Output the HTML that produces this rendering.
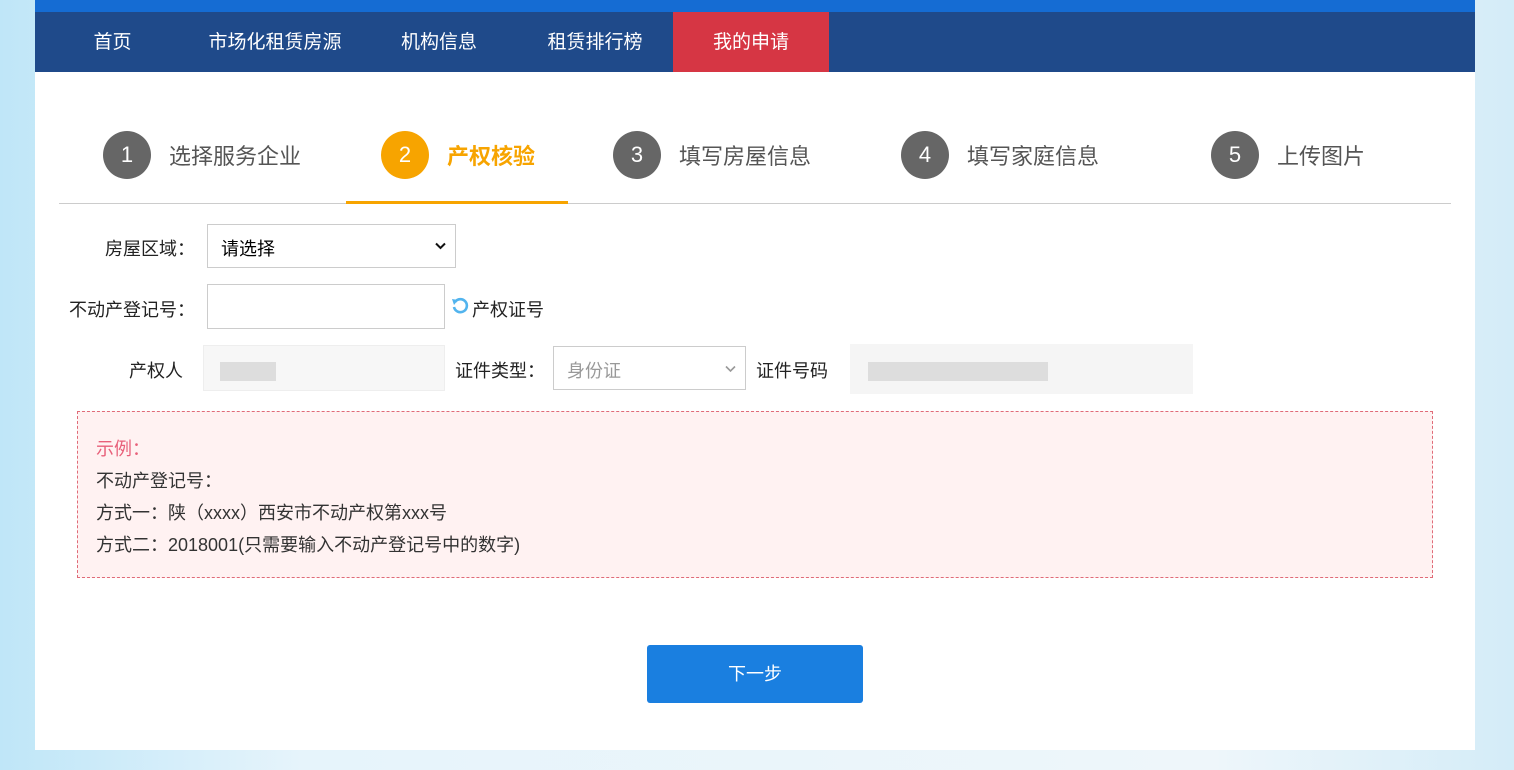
<!DOCTYPE html>
<html><head><meta charset="utf-8"><style>
body{margin:0;width:1514px;height:770px;overflow:hidden;background:linear-gradient(90deg,#bfe6f8,#e6f4fb 20%,#eef6fa 80%,#d4ecf8);font-family:"Liberation Sans","Noto Sans CJK SC",sans-serif;position:relative}
.abs{position:absolute}
.top{left:35px;top:0;width:1440px;height:12px;background:#156cd3}
.nav{left:35px;top:12px;width:1440px;height:60px;background:#1f4a8a}
.nav span{position:absolute;top:0;height:60px;line-height:62px;color:#fff;font-size:19px;text-align:center}
.main{left:35px;top:72px;width:1440px;height:678px;background:#fff}
.step{position:absolute;top:131px;height:48px;display:flex;align-items:center;font-size:22px;color:#555}
.c{width:48px;height:48px;border-radius:50%;background:#666;color:#fff;text-align:center;line-height:48px;font-size:22px;margin-right:18px}
.lbl{position:absolute;font-size:18px;color:#222;text-align:right}
.box{position:absolute;border:1px solid #ccc;background:#fff;box-sizing:border-box}
</style></head><body>
<div class="abs top"></div>
<div class="abs nav">
<span style="left:40px;width:75px">首页</span>
<span style="left:160px;width:160px">市场化租赁房源</span>
<span style="left:354px;width:100px">机构信息</span>
<span style="left:495px;width:130px">租赁排行榜</span>
<span style="left:638px;width:156px;background:#d63644">我的申请</span>
</div>
<div class="abs main"></div>
<div class="step" style="left:103px"><div class="c">1</div>选择服务企业</div>
<div class="step" style="left:381px;color:#f7a400;font-weight:bold"><div class="c" style="background:#f7a400;font-weight:normal">2</div>产权核验</div>
<div class="step" style="left:613px"><div class="c">3</div>填写房屋信息</div>
<div class="step" style="left:901px"><div class="c">4</div>填写家庭信息</div>
<div class="step" style="left:1211px"><div class="c">5</div>上传图片</div>
<div class="abs" style="left:59px;top:203px;width:1392px;height:1px;background:#ccc"></div>
<div class="abs" style="left:346px;top:201px;width:222px;height:3px;background:#f7a400"></div>

<div class="lbl" style="left:60px;top:235px;width:135px">房屋区域：</div>
<div class="box" style="left:207px;top:224px;width:249px;height:44px;font-size:18px;padding:10px 13px">请选择<svg style="position:absolute;right:9px;top:17px" width="11" height="8" viewBox="0 0 11 8"><path d="M1 1.5 L5.5 6 L10 1.5" fill="none" stroke="#111" stroke-width="2"/></svg></div>
<div class="lbl" style="left:60px;top:296px;width:135px">不动产登记号：</div>
<div class="box" style="left:207px;top:284px;width:238px;height:45px"></div>
<svg class="abs" style="left:451px;top:297px" width="18" height="18" viewBox="0 0 18 18"><path d="M4 5 A6.5 6.5 0 1 1 3 10" fill="none" stroke="#52b4ee" stroke-width="2.6"/><path d="M1 2 L7 3 L3 8Z" fill="#52b4ee"/></svg>
<div class="lbl" style="left:472px;top:296px;text-align:left">产权证号</div>
<div class="lbl" style="left:60px;top:357px;width:123px">产权人</div>
<div class="box" style="left:203px;top:345px;width:242px;height:46px;background:#f7f7f7;border-color:#eee"></div>
<div class="abs" style="left:220px;top:362px;width:56px;height:19px;background:#ddd"></div>
<div class="lbl" style="left:455px;top:357px;text-align:left">证件类型：</div>
<div class="box" style="left:553px;top:346px;width:193px;height:44px;color:#999;font-size:18px;padding:10px 13px">身份证<svg style="position:absolute;right:9px;top:18px" width="11" height="8" viewBox="0 0 11 8"><path d="M1 1.5 L5.5 6 L10 1.5" fill="none" stroke="#999" stroke-width="1.6"/></svg></div>
<div class="lbl" style="left:756px;top:357px;text-align:left">证件号码</div>
<div class="abs" style="left:850px;top:344px;width:343px;height:50px;background:#f5f5f5"></div>
<div class="abs" style="left:868px;top:362px;width:180px;height:19px;background:#ddd"></div>

<div class="abs" style="left:77px;top:411px;width:1356px;height:167px;box-sizing:border-box;border:1px dashed #e06b78;background:#fff2f2;padding:21px 18px;font-size:18px;line-height:32px;color:#333">
<div style="color:#e8607a">示例：</div>
<div>不动产登记号：</div>
<div>方式一：陕（xxxx）西安市不动产权第xxx号</div>
<div>方式二：2018001(只需要输入不动产登记号中的数字)</div>
</div>
<div class="abs" style="left:647px;top:645px;width:216px;height:58px;background:#1a7fe0;border-radius:3px;color:#fff;font-size:18px;text-align:center;line-height:58px">下一步</div>
</body></html>
